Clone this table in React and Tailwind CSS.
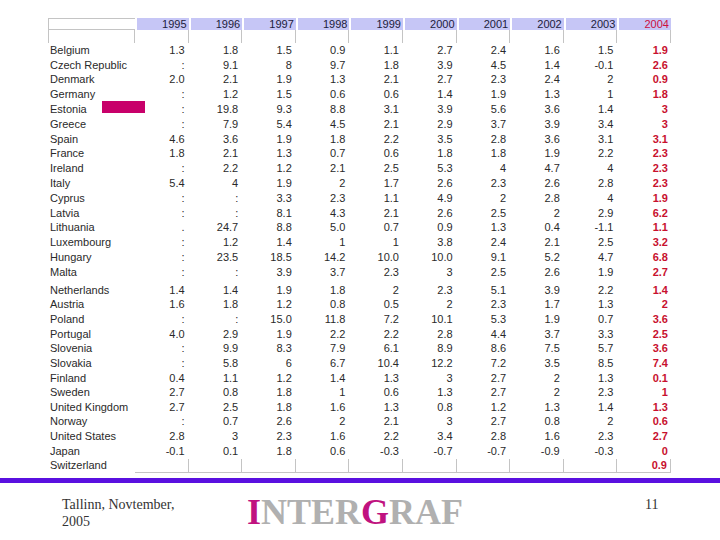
import React from 'react'

const years = ['1995', '1996', '1997', '1998', '1999', '2000', '2001', '2002', '2003', '2004']

const groupA = [
  ['Belgium', '1.3', '1.8', '1.5', '0.9', '1.1', '2.7', '2.4', '1.6', '1.5', '1.9'],
  ['Czech Republic', ':', '9.1', '8', '9.7', '1.8', '3.9', '4.5', '1.4', '-0.1', '2.6'],
  ['Denmark', '2.0', '2.1', '1.9', '1.3', '2.1', '2.7', '2.3', '2.4', '2', '0.9'],
  ['Germany', ':', '1.2', '1.5', '0.6', '0.6', '1.4', '1.9', '1.3', '1', '1.8'],
  ['Estonia', ':', '19.8', '9.3', '8.8', '3.1', '3.9', '5.6', '3.6', '1.4', '3'],
  ['Greece', ':', '7.9', '5.4', '4.5', '2.1', '2.9', '3.7', '3.9', '3.4', '3'],
  ['Spain', '4.6', '3.6', '1.9', '1.8', '2.2', '3.5', '2.8', '3.6', '3.1', '3.1'],
  ['France', '1.8', '2.1', '1.3', '0.7', '0.6', '1.8', '1.8', '1.9', '2.2', '2.3'],
  ['Ireland', ':', '2.2', '1.2', '2.1', '2.5', '5.3', '4', '4.7', '4', '2.3'],
  ['Italy', '5.4', '4', '1.9', '2', '1.7', '2.6', '2.3', '2.6', '2.8', '2.3'],
  ['Cyprus', ':', ':', '3.3', '2.3', '1.1', '4.9', '2', '2.8', '4', '1.9'],
  ['Latvia', ':', ':', '8.1', '4.3', '2.1', '2.6', '2.5', '2', '2.9', '6.2'],
  ['Lithuania', '.', '24.7', '8.8', '5.0', '0.7', '0.9', '1.3', '0.4', '-1.1', '1.1'],
  ['Luxembourg', ':', '1.2', '1.4', '1', '1', '3.8', '2.4', '2.1', '2.5', '3.2'],
  ['Hungary', ':', '23.5', '18.5', '14.2', '10.0', '10.0', '9.1', '5.2', '4.7', '6.8'],
  ['Malta', ':', ':', '3.9', '3.7', '2.3', '3', '2.5', '2.6', '1.9', '2.7'],
]

const groupB = [
  ['Netherlands', '1.4', '1.4', '1.9', '1.8', '2', '2.3', '5.1', '3.9', '2.2', '1.4'],
  ['Austria', '1.6', '1.8', '1.2', '0.8', '0.5', '2', '2.3', '1.7', '1.3', '2'],
  ['Poland', ':', ':', '15.0', '11.8', '7.2', '10.1', '5.3', '1.9', '0.7', '3.6'],
  ['Portugal', '4.0', '2.9', '1.9', '2.2', '2.2', '2.8', '4.4', '3.7', '3.3', '2.5'],
  ['Slovenia', ':', '9.9', '8.3', '7.9', '6.1', '8.9', '8.6', '7.5', '5.7', '3.6'],
  ['Slovakia', ':', '5.8', '6', '6.7', '10.4', '12.2', '7.2', '3.5', '8.5', '7.4'],
  ['Finland', '0.4', '1.1', '1.2', '1.4', '1.3', '3', '2.7', '2', '1.3', '0.1'],
  ['Sweden', '2.7', '0.8', '1.8', '1', '0.6', '1.3', '2.7', '2', '2.3', '1'],
  ['United Kingdom', '2.7', '2.5', '1.8', '1.6', '1.3', '0.8', '1.2', '1.3', '1.4', '1.3'],
  ['Norway', ':', '0.7', '2.6', '2', '2.1', '3', '2.7', '0.8', '2', '0.6'],
  ['United States', '2.8', '3', '2.3', '1.6', '2.2', '3.4', '2.8', '1.6', '2.3', '2.7'],
  ['Japan', '-0.1', '0.1', '1.8', '0.6', '-0.3', '-0.7', '-0.7', '-0.9', '-0.3', '0'],
]

const grid = 'grid grid-cols-[87px_repeat(10,53.6px)]'

function DataRow({ row, h }) {
  return (
    <div className={`${grid} ${h} items-center`}>
      <div className="relative pl-[2px] text-[#2a2a2a] whitespace-nowrap">
        {row[0]}
        {/* farbmarke */}
        {row[0] === 'Estonia' && (
          <span className="absolute left-[54px] top-[-3px] w-[43px] h-[12px] bg-[#c8006a]" />
        )}
      </div>
      {row.slice(1).map((v, i) => (
        <div
          key={i}
          className={
            i === 9
              ? 'text-right pr-[3px] font-bold text-[#c8102e]'
              : 'text-right pr-[4px] text-[#2a2a2a]'
          }
        >
          {v}
        </div>
      ))}
    </div>
  )
}

export default function App() {
  return (
    <div className="w-[720px] h-[540px] bg-white overflow-hidden flex flex-col">
      {/* tabelle */}
      <div className="pt-[18px] pl-[48px] h-[478px] text-[11px] leading-none font-['Liberation_Sans',Arial,sans-serif]">
        <div className="w-[623px]">
          {/* kopfzeile */}
          <div className={`${grid} h-[12px]`}>
            <div className="border-t border-l border-b border-[#c4c4c4]" />
            {years.map((y) => (
              <div
                key={y}
                className={`ml-[2px] bg-[#c6c6f6] flex items-center justify-end pr-[2px] ${
                  y === '2004' ? 'text-[#cc1040]' : 'text-[#1c1c3c]'
                }`}
              >
                {y}
              </div>
            ))}
          </div>
          <div className={`${grid} h-[13px]`}>
            <div className="border-l border-r border-[#c4c4c4]" />
            {years.map((y) => (
              <div key={y} className="border-r border-[#c4c4c4]" />
            ))}
          </div>

          {groupA.map((r) => (
            <DataRow key={r[0]} row={r} h="h-[14.8px]" />
          ))}
          <div className="h-[3px]" />
          {groupB.map((r) => (
            <DataRow key={r[0]} row={r} h="h-[14.67px]" />
          ))}

          {/* letzte zeile */}
          <div className={`${grid} h-[14.67px]`}>
            <div className="pl-[2px] text-[#2a2a2a] flex items-center">Switzerland</div>
            {years.map((y) => (
              <div
                key={y}
                className="border-r border-b border-[#c4c4c4] flex items-center justify-end pr-[3px] font-bold text-[#c8102e]"
              >
                {y === '2004' ? '0.9' : ''}
              </div>
            ))}
          </div>
        </div>
      </div>

      {/* trennlinie */}
      <div className="h-[5px] bg-[#5a10e0]" />

      {/* fusszeile */}
      <div className="flex items-start pt-[13px] font-['Liberation_Serif','Times_New_Roman',serif]">
        <div className="w-[247px] pl-[62px] text-[14px] leading-[17px] text-[#333]">
          Tallinn, Novtember,
          <br />
          2005
        </div>
        <div className="w-[398px] text-[36px] leading-none font-bold text-[#b0b0b0] -mt-[2px]">
          <span className="text-[#c0127f]">I</span>NTER<span className="text-[#c0127f]">G</span>RAF
        </div>
        <div className="text-[14px] leading-[17px] text-[#333]">11</div>
      </div>
    </div>
  )
}
